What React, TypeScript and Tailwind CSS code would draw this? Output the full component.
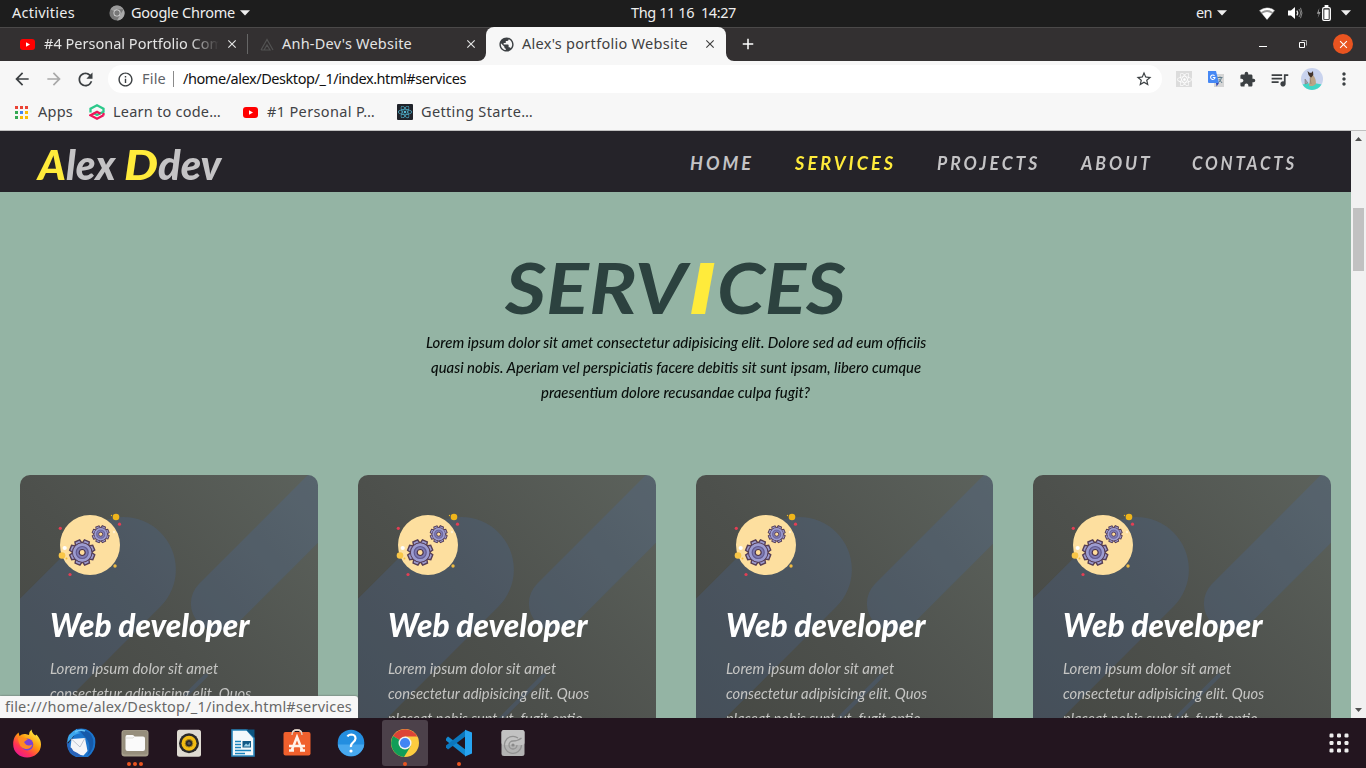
import { useLayoutEffect, useRef } from "react";
import type { ReactNode } from "react";
import {
  MdAdd,
  MdArrowBack,
  MdArrowForward,
  MdClose,
  MdExtension,
  MdMoreVert,
  MdOutlineInfo,
  MdPublic,
  MdQueueMusic,
  MdRefresh,
  MdStarBorder,
} from "react-icons/md";
import { FaReact } from "react-icons/fa";

/* Spaces the letters of a label so that it fills a given width. */
function Label({ w, className = "", children }: { w: number; className?: string; children: string }) {
  const ref = useRef<HTMLSpanElement>(null);
  useLayoutEffect(() => {
    const el = ref.current;
    if (!el) return;
    el.style.letterSpacing = "0px";
    el.style.letterSpacing = `${(w - el.getBoundingClientRect().width) / children.length}px`;
  }, [w, children]);
  return (
    <span ref={ref} className={`inline-block shrink-0 pb-[2px] whitespace-pre ${className}`}>
      {children}
    </span>
  );
}

/* Condenses or widens display type to a given width. */
function Display({ w, className = "", children }: { w: number; className?: string; children: string }) {
  const ref = useRef<HTMLSpanElement>(null);
  useLayoutEffect(() => {
    const el = ref.current;
    if (el) el.style.transform = `scaleX(${w / el.offsetWidth})`;
  }, [w, children]);
  return (
    <span className="inline-block shrink-0 text-left" style={{ width: w }}>
      <span ref={ref} className={`inline-block origin-left whitespace-pre ${className}`}>
        {children}
      </span>
    </span>
  );
}

const Caret = () => (
  <svg className="h-[6px] w-[10px] shrink-0" viewBox="0 0 10 6">
    <path d="M0 .3h10L5 5.6z" fill="#eee" />
  </svg>
);

const Youtube = () => (
  <svg className="h-[11px] w-[15px] shrink-0" viewBox="0 0 15 11">
    <rect width="15" height="11" rx="3" fill="#f00" />
    <path d="M6 3.2v4.6l4-2.3z" fill="#fff" />
  </svg>
);

function TopBar() {
  return (
    <div className="flex h-[27px] items-center bg-[#1d1d1d] pb-px text-[14.5px] text-[#eeeeee]">
      <Label w={63} className="ml-3">Activities</Label>
      <svg className="ml-[34px] h-4 w-4 shrink-0" viewBox="0 0 16 16">
        <circle cx="8" cy="8" r="7.6" fill="#777" />
        <path d="M8 8L1.4 4.3A7.6 7.6 0 0 1 14.6 4.3H8z" fill="#999" />
        <path d="M8 15.6L11.3 9.7 14.6 4.3A7.6 7.6 0 0 1 8 15.6" fill="#aaa" />
        <circle cx="8" cy="8" r="3.5" fill="#ddd" />
        <circle cx="8" cy="8" r="2.7" fill="#777" />
      </svg>
      <Label w={104} className="ml-[6px]">Google Chrome</Label>
      <div className="ml-[5px]"><Caret /></div>
      <Label w={105} className="ml-[381px]">Thg 11 16  14:27</Label>
      <Label w={16} className="ml-[460px]">en</Label>
      <div className="ml-[5px]"><Caret /></div>
      <svg className="ml-8 h-[13px] w-4 shrink-0" viewBox="0 0 16 13">
        <path d="M0 3.6Q8-2.8 16 3.6L8 13z" fill="#999" />
        <path d="M1 3.4Q8-1.6 15 3.4L13.7 5Q8 1.2 2.3 5z" fill="#fff" />
        <path d="M3.2 6.5Q8 3.3 12.8 6.5L8 12.4z" fill="#fff" />
      </svg>
      <svg className="ml-[13px] h-[14px] w-[15px] shrink-0" viewBox="0 0 15 14">
        <path d="M0 4.5h3L7 1v12L3 9.5H0z" fill="#fff" />
        <path d="M8.8 4.6q1.8 2.4 0 4.8" fill="none" stroke="#ddd" strokeWidth="1.3" />
        <path d="M10.9 3q3.2 4 0 8M12.5 1.8q3 5.2 0 10.4" fill="none" stroke="#888" strokeWidth="1" />
      </svg>
      <svg className="ml-[13px] h-4 w-[15px] shrink-0" viewBox="0 0 15 16">
        <path d="M3.3 3L.8 8.7h2L1.7 13 4.6 7H2.8z" fill="#999" />
        <rect x="6.7" y="2.7" width="7.6" height="12.6" rx="1.3" fill="none" stroke="#fff" strokeWidth="1.3" />
        <path d="M8.3 4.5h4.4V14H8.3zM8.6 0h3.8v2.5H8.6z" fill="#fff" />
      </svg>
      <div className="ml-[10px]"><Caret /></div>
    </div>
  );
}

function TabStrip() {
  return (
    <div className="flex h-[34px] items-stretch bg-[#333031] text-[14.5px] text-[#e4e4e4] shadow-[inset_0_1px_0_#4b4949]">
      <div className="flex w-[247px] items-center pl-5">
        <Youtube />
        <div className="ml-[9px] w-[176px] overflow-hidden whitespace-nowrap [mask-image:linear-gradient(to_right,#000_145px,transparent_175px)]">
          <Label w={188}>#4 Personal Portfolio Comp</Label>
        </div>
        <MdClose className="ml-[5px] h-[14px] w-[14px] shrink-0 stroke-current" />
      </div>
      <div className="my-auto h-5 w-px bg-[#666]" />
      <div className="flex w-[238px] items-center pl-[12px]">
        <svg className="h-[13px] w-[14px] shrink-0" viewBox="0 0 14 13" fill="none" stroke="#525252" strokeWidth="1.2">
          <path d="M1 12L7 1.5 13 12M4 12l3-5 3 5zM1 12h3" />
        </svg>
        <Label w={130} className="ml-[8px]">Anh-Dev's Website</Label>
        <MdClose className="ml-[52px] h-[14px] w-[14px] shrink-0 stroke-current" />
      </div>
      <div className="relative flex w-[240px] items-center rounded-t-[8px] bg-[#f7f7f7] pl-3 text-[#404040]">
        <svg className="absolute bottom-0 -left-2 h-2 w-2" viewBox="0 0 8 8"><path d="M8 0v8H0a8 8 0 0 0 8-8" fill="#f7f7f7" /></svg>
        <svg className="absolute -right-2 bottom-0 h-2 w-2" viewBox="0 0 8 8"><path d="M0 0v8h8a8 8 0 0 1-8-8" fill="#f7f7f7" /></svg>
        <MdPublic className="h-[17px] w-[17px] shrink-0 text-[#3c4043]" />
        <Label w={166} className="ml-[7px]">Alex's portfolio Website</Label>
        <MdClose className="ml-[15px] h-[14px] w-[14px] shrink-0 stroke-current" />
      </div>
      <div className="flex grow items-center pl-[13px] text-white">
        <MdAdd className="h-[18px] w-[18px] stroke-current" />
        <svg className="ml-auto h-2 w-[9px]" viewBox="0 0 9 8"><path d="M0 6h8v1H0z" fill="#fff" /></svg>
        <svg className="ml-[31px] h-2 w-2" viewBox="0 0 8 8" fill="none"><path d="M.5 2.5h5v5h-5z" stroke="#fff" /><path d="M2.5.5h5v5" stroke="#aaa" /></svg>
        <div className="mr-[13px] ml-[26px] flex h-5 w-5 items-center justify-center rounded-full bg-[#e95420]">
          <MdClose className="h-[13px] w-[13px] stroke-current" />
        </div>
      </div>
    </div>
  );
}

function Toolbar() {
  return (
    <div className="flex h-9 items-center bg-[#f7f7f7] text-[14.5px] text-[#3c4043]">
      <MdArrowBack className="ml-[12px] h-5 w-5 shrink-0" />
      <MdArrowForward className="ml-[12px] h-5 w-5 shrink-0 text-[#a9a9a9]" />
      <MdRefresh className="ml-[11px] h-[21px] w-[21px] shrink-0" />
      <div className="ml-[12px] flex h-7 w-[1054px] shrink-0 items-center rounded-full bg-white">
        <MdOutlineInfo className="ml-[9px] h-[17px] w-[17px] shrink-0" />
        <Label w={24} className="ml-[8px] text-[#5f6368]">File</Label>
        <div className="ml-[7px] h-4 w-px bg-[#8a8a8a]" />
        <Label w={283} className="ml-[9px] text-[#111]">/home/alex/Desktop/_1/index.html#services</Label>
        <MdStarBorder className="mr-[9px] ml-auto h-[18px] w-[18px]" />
      </div>
      <div className="ml-[14px] flex h-4 w-4 shrink-0 items-center justify-center bg-[#dcdcdc]">
        <FaReact className="h-[15px] w-[15px] text-white" />
      </div>
      <svg className="ml-4 h-4 w-4 shrink-0" viewBox="0 0 16 16">
        <rect x="6" y="3" width="10" height="13" fill="#d5d5d5" />
        <path d="M0 0h8l3 12H1a1 1 0 0 1-1-1z" fill="#4688f4" />
        <path d="M8 12h3l-2.4 3.5z" fill="#3247b5" />
        <path d="M9.5 6.5h5M12 5.5v1M13.5 6.5q-.5 3-3 5M10.8 8l3.3 4" stroke="#607d8b" fill="none" />
        <path d="M6.5 4.8A2.2 2.2 0 1 0 7 6.5H4.8" stroke="#fff" strokeWidth="1.1" fill="none" />
      </svg>
      <MdExtension className="ml-[15px] h-[17px] w-[17px] shrink-0" />
      <MdQueueMusic className="ml-[13px] h-[21px] w-[21px] shrink-0" />
      <svg className="ml-[11px] h-[22px] w-[22px] shrink-0" viewBox="0 0 22 22">
        <circle cx="11" cy="11" r="11" fill="#c9d3ee" />
        <path d="M1.5 16.5Q11 13.5 20.5 16.5A11 11 0 0 1 1.5 16.5" fill="#42d5c5" />
        <path d="M8 7h4q3 3 3 9l-3 2H8l1-8z" fill="#bba486" />
        <path d="M6.5 3l2 1.8h2L12 3l.3 4-2.3 2.7L7.500 7z" fill="#43352c" />
        <path d="M9 10l1 6M4 11l3 4-3 1z" fill="#9da2b4" stroke="#786c60" strokeWidth=".5" />
      </svg>
      <MdMoreVert className="ml-[11px] h-5 w-5 shrink-0" />
    </div>
  );
}

const appColors = ["fill-[#ea4335]", "fill-[#ea4335]", "fill-[#ea4335]", "fill-[#34a853]", "fill-[#4285f4]", "fill-[#fbbc05]", "fill-[#34a853]", "fill-[#fbbc05]", "fill-[#fbbc05]"];

function Bookmarks() {
  return (
    <div className="flex h-[34px] items-center border-b border-[#c0c0c0] bg-[#f7f7f7] pb-[3px] text-[14.5px] text-[#3f4245]">
      <svg className="ml-[15px] h-[13px] w-[13px] shrink-0" viewBox="0 0 13 13">
        {appColors.map((c, i) => (
          <rect key={i} className={c} x={(i % 3) * 5} y={Math.floor(i / 3) * 5} width="3" height="3" />
        ))}
      </svg>
      <Label w={35} className="ml-[10px]">Apps</Label>
      <svg className="ml-4 h-4 w-4 shrink-0" viewBox="0 0 16 16" fill="none" strokeWidth="2.3">
        <path d="M1.500 8.500V4.700L8 1.300l6.500 3.400v3L8 11 4.500 9" stroke="#2cc98b" />
        <path d="M14.500 11.300L8 14.700l-6.500-3.400L8 7.700l3.500 2" stroke="#f0145a" />
        <path d="M14.500 11.500V9" stroke="#f0145a" />
      </svg>
      <Label w={108} className="ml-2">Learn to code…</Label>
      <div className="ml-[22px] flex"><Youtube /></div>
      <Label w={108} className="ml-[9px]">#1 Personal P…</Label>
      <div className="ml-[22px] flex h-4 w-4 shrink-0 items-center justify-center rounded-[1px] bg-[#20232a]">
        <FaReact className="h-[14px] w-[14px] text-[#53b9d5]" />
      </div>
      <Label w={112} className="ml-2">Getting Starte…</Label>
    </div>
  );
}

function SiteNav() {
  return (
    <nav className="flex h-[61px] shrink-0 items-center bg-[#252329] font-['Lato',sans-serif] italic text-[#c4c3c5]">
      <div className="ml-[38px] flex pt-[6px] text-[41px] leading-none font-black">
        <Display w={28} className="text-[#ffeb3b]">A</Display>
        <Display w={58}>{"lex "}</Display>
        <Display w={34} className="text-[#ffeb3b]">D</Display>
        <Display w={63}>dev</Display>
      </div>
      <div className="mr-[54px] ml-auto flex pt-[2px] text-[18px] font-bold">
        <Display w={64} className="tracking-[3px]">HOME</Display>
        <div className="ml-[41px] text-[#ffeb3b]"><Display w={101} className="tracking-[3px]">SERVICES</Display></div>
        <div className="ml-[41px]"><Display w={103} className="tracking-[3px]">PROJECTS</Display></div>
        <div className="ml-[41px]"><Display w={72} className="tracking-[3px]">ABOUT</Display></div>
        <div className="ml-[39px]"><Display w={105} className="tracking-[3px]">CONTACTS</Display></div>
      </div>
    </nav>
  );
}

function Gear({ x, y, r }: { x: number; y: number; r: number }) {
  return (
    <g transform={`translate(${x} ${y}) scale(${r / 13})`}>
      <g fill="#9c9bd0" stroke="#563e55" strokeWidth="1.4">
        {[0, 45, 90, 135, 180, 225, 270, 315].map((a) => (
          <path key={a} d="M-3.600-8L-2.600-12.500h5.200L3.600-8z" transform={`rotate(${a + 22})`} />
        ))}
        <circle r="9.6" />
      </g>
      <circle r="9.2" fill="#9c9bd0" />
      <circle r="6" fill="#7f7cb5" stroke="#625a90" strokeWidth="1.2" />
      <circle r="3" fill="#ffdc9a" stroke="#49324b" strokeWidth="1.2" />
    </g>
  );
}

function GearBadge() {
  return (
    <svg className="h-20 w-20" viewBox="0 0 80 80">
      <circle cx="40" cy="40" r="30" fill="#fddf9f" />
      <circle cx="66" cy="12" r="3.3" fill="#efb51b" />
      <circle cx="61.5" cy="10.5" r=".7" fill="#efb51b" />
      <circle cx="12" cy="50.5" r="3.3" fill="#f9c647" />
      <circle cx="16.5" cy="53.5" r="1" fill="#f6c036" />
      <circle cx="65" cy="61" r="1.7" fill="#efbb42" />
      <circle cx="14.7" cy="43" r="2.1" fill="#fff" />
      <circle cx="64" cy="27" r="1.2" fill="#fff0cf" />
      <circle cx="10.3" cy="23.3" r="1.6" fill="#e43e54" />
      <circle cx="69.5" cy="19.2" r="1.6" fill="#e43e54" />
      <circle cx="20" cy="69.5" r="1.6" fill="#e43e54" />
      <Gear x={32.2} y={47.500} r={13} />
      <Gear x={50.700} y={29.200} r={8.800} />
    </svg>
  );
}

function ServiceCard() {
  return (
    <article className="relative h-[330px] overflow-hidden rounded-[10px] bg-linear-to-tr from-[#434540] via-[#4d504c] to-[#5c625c] p-[30px] font-['Lato',sans-serif] italic">
      <svg className="absolute inset-0 h-full w-full" viewBox="0 0 298 330" preserveAspectRatio="none" stroke="#466eb4" strokeOpacity=".2" strokeLinecap="round">
        <path d="M103.5 94.5L-120 318" strokeWidth="105" />
        <path d="M198.5 128.5L440-113" strokeWidth="55" />
        <path d="M186 200.5L60 326.5" strokeWidth="4" />
      </svg>
      <div className="relative">
        <GearBadge />
        <h2 className="mt-4 h-[51px] text-[31.5px] leading-[48px] font-black text-white">
          <Display w={199.5}>Web developer</Display>
        </h2>
        <p className="mt-1 text-[15.5px] leading-[25px] text-[#c5c5c3]">
          <Display w={168}>Lorem ipsum dolor sit amet</Display>
          <br />
          <Display w={201}>consectetur adipisicing elit. Quos</Display>
          <br />
          <Display w={195}>placeat nobis sunt ut, fugit optio</Display>
        </p>
      </div>
    </article>
  );
}

function Website() {
  return (
    <main className="flex h-[587px] w-[1351px] flex-col overflow-hidden bg-[#94b4a4]">
      <SiteNav />
      <header className="mt-[54px] flex shrink-0 flex-col items-center font-['Lato',sans-serif] italic">
        <h1 className="flex h-[84px] text-[71px] leading-[82px] font-bold text-[#2c423f]">
          <Display w={182}>SERV</Display>
          <Display w={30} className="text-[#ffeb3b]">I</Display>
          <Display w={129}>CES</Display>
        </h1>
        <div className="flex flex-col items-center text-[15.5px] leading-[25px] font-medium text-[#080d0b]">
          <Display w={500}>Lorem ipsum dolor sit amet consectetur adipisicing elit. Dolore sed ad eum officiis</Display>
          <Display w={490}>quasi nobis. Aperiam vel perspiciatis facere debitis sit sunt ipsam, libero cumque</Display>
          <Display w={269}>praesentium dolore recusandae culpa fugit?</Display>
        </div>
      </header>
      <section className="mt-[70px] grid grid-cols-4 gap-10 px-5">
        {[0, 1, 2, 3].map((i) => (
          <ServiceCard key={i} />
        ))}
      </section>
    </main>
  );
}

function Scrollbar() {
  return (
    <div className="flex h-[587px] w-[15px] flex-col items-center bg-[#f1f1f1]">
      <svg className="mt-[6px] h-1 w-[7px]" viewBox="0 0 7 4"><path d="M0 4h7L3.5 0z" fill="#505050" /></svg>
      <div className="mt-[67px] h-[63px] w-[11px] bg-[#c1c1c1]" />
      <svg className="mt-auto mb-[6px] h-1 w-[7px]" viewBox="0 0 7 4"><path d="M0 0h7L3.5 4z" fill="#505050" /></svg>
    </div>
  );
}

const Firefox = () => (
  <svg className="h-[29px] w-7" viewBox="0 0 28 28">
    <defs>
      <linearGradient id="ff" x1=".85" y1=".1" x2=".2" y2="1">
        <stop offset="0" stopColor="#fff044" />
        <stop offset=".4" stopColor="#ff980e" />
        <stop offset=".7" stopColor="#ff3750" />
        <stop offset="1" stopColor="#e8129b" />
      </linearGradient>
    </defs>
    <path d="M3 5.5L5.5 3l1 3.5Q9 4 12.5 4.500L16 5.5Q16 2 18.5 0 19 4 22.5 6l1-1Q28 10 28 15a13.8 13 0 0 1-27.8 0Q0 9 3 5.5" fill="url(#ff)" />
    <circle cx="14.3" cy="15" r="6" fill="#7942d6" />
    <path d="M5 8.5q4-2 7 .5l3 .5-4 3q3 5.5 8.500 2.500-2 5-7 4.500Q5.500 18 5 8.500" fill="#ff8a22" />
  </svg>
);

const Thunderbird = () => (
  <svg className="h-[30px] w-[30px]" viewBox="0 0 30 30">
    <path d="M10 1Q24-2 29 10q2 12-7 19H10Q2 26 1 17L8 8z" fill="#1b74cc" />
    <path d="M14 3q10-2 13 8 2 10-6 17 6-12-3-20z" fill="#1559a9" />
    <path d="M1 15Q1 5 11 1q-1 3 4 4-7 1-9 5z" fill="#3ba6ec" />
    <path d="M9 4q5-3 10-1" fill="none" stroke="#67c3f5" strokeWidth="1.500" />
    <path d="M5.500 11L19 10l2.500 13-4 4.500Q9 27 4.500 20z" fill="#f4f5f8" />
    <path d="M5.500 11l8.500 8 5-9" fill="none" stroke="#bcc3cf" />
    <path d="M.5 14l2 2 1 3 2 1 2 3 4 2 5 3.500Q3 30 .5 14" fill="#2b62b8" />
  </svg>
);

const Files = () => (
  <svg className="h-7 w-7" viewBox="0 0 28 28">
    <rect x=".5" y="1" width="27" height="26.500" rx="3" fill="#a79f8c" />
    <rect x="1.500" y="1.500" width="25" height="24" rx="2.500" fill="#968e7c" />
    <path d="M6 6h5.500q1.500 0 2 1.500H22q2 0 2 2V20q0 2-2 2H6.500q-2 0-2-2V8q0-2 1.500-2" fill="#fafafa" />
    <path d="M5 9h7l1.500-1.500" fill="none" stroke="#deddd9" />
  </svg>
);

const Rhythmbox = () => (
  <svg className="h-7 w-7" viewBox="0 0 28 28">
    <rect x="2" y=".8" width="24" height="27" rx="2.500" fill="#dfdbd2" />
    <circle cx="14" cy="14.300" r="10" fill="#292929" />
    <circle cx="14" cy="14.300" r="7.500" fill="#f2bd13" />
    <circle cx="14" cy="14.300" r="3.800" fill="#292929" stroke="#a88518" />
    <circle cx="14" cy="14.300" r="1.500" fill="#555" />
  </svg>
);

const Writer = () => (
  <svg className="h-7 w-7" viewBox="0 0 28 28">
    <path d="M3 1h15l7 8v18H3z" fill="#f4f9fb" stroke="#2785bc" strokeWidth="1.600" />
    <path d="M17 .5h8.500V9z" fill="#0c547f" />
    <path d="M6 12.500h6M6 15.500h6M6 18.500h6M6 21.500h16M6 24.500h10" stroke="#1b83bb" strokeWidth="1.500" />
    <path d="M13.500 12h8.500v6.500h-8.500z" fill="#115985" />
    <path d="M14.500 17.500l2.500-3 2 1.500 2-2.500v4z" fill="#9ad1e9" />
  </svg>
);

const Software = () => (
  <svg className="h-7 w-7" viewBox="0 0 28 28">
    <path d="M9 6q0-5 5-5t5 5" fill="none" stroke="#e4d5c9" strokeWidth="1.700" />
    <rect x=".5" y="3" width="27" height="23.500" rx="2" fill="#f0602d" />
    <path d="M9 6q0-5 5-5t5 5" fill="none" stroke="#e4d5c9" strokeWidth="1.300" />
    <path d="M8.500 22L14 8 19.500 22M6 17h16M6 21.500h5M17 21.500h5" fill="none" stroke="#fff2ea" strokeWidth="2.500" />
  </svg>
);

const Help = () => (
  <svg className="h-7 w-7" viewBox="0 0 28 28">
    <circle cx="14" cy="14" r="13.300" fill="#238ee0" />
    <path d="M.8 15.500h26.400A13.300 13.300 0 0 1 .8 15.500" fill="#48a8ee" />
    <path d="M10.500 7.500q1-2 4-2 4 .3 4 4 0 2-2.500 4T14 18" fill="none" stroke="#fff" strokeWidth="2.200" />
    <circle cx="14" cy="22" r="1.600" fill="#fff" />
  </svg>
);

const Chrome = () => (
  <svg className="h-7 w-7" viewBox="0 0 28 28">
    <circle cx="14" cy="14" r="14" fill="#fccc40" />
    <path d="M14 14L2 7A14 14 0 0 1 26.200 7.500H14z" fill="#dc4437" />
    <path d="M14 14L2 7A14 14 0 0 0 13 28l6.500-10.500z" fill="#119d58" />
    <circle cx="14" cy="14" r="6.500" fill="#f2f2f2" />
    <circle cx="14" cy="14" r="5.100" fill="#4285f4" />
  </svg>
);

const VsCode = () => (
  <svg className="h-7 w-7" viewBox="0 0 28 28">
    <path d="M1 9.500l2-2 18 13.500V27.500L1 11.500z" fill="#1389d0" />
    <path d="M1 18.500l2 2L21 7V.700L1 16.500z" fill="#0b77bd" />
    <path d="M20 .700L27 3.500v21L20 27.500z" fill="#27a4f1" />
  </svg>
);

const Disks = () => (
  <svg className="h-7 w-7" viewBox="0 0 28 28">
    <rect x="2.500" y="1" width="23" height="26" rx="2.500" fill="#b3b3b3" />
    <rect x="2.500" y="1" width="23" height="15" rx="2.500" fill="#c2c2c2" />
    <path d="M22.500 16A8.500 8.500 0 1 1 19 9M18 16A4 4 0 1 1 14 12q5 0 8.500-3" fill="none" stroke="#929292" strokeWidth="1.300" />
    <circle cx="14" cy="16" r="1.600" fill="#898989" />
  </svg>
);

function DockItem({ dots = 0, active = false, children }: { dots?: number; active?: boolean; children: ReactNode }) {
  return (
    <div className="flex h-[50px] w-[54px] items-center justify-center">
      <div className={`relative flex h-[46px] w-[46px] items-center justify-center rounded-[3px] ${active ? "bg-[#4c414a]" : ""}`}>
        {children}
        <div className="absolute inset-x-0 bottom-0 flex justify-center gap-[2px]">
          {Array.from({ length: dots }, (_, i) => (
            <span key={i} className="h-1 w-1 rounded-full bg-[#e95420]" />
          ))}
        </div>
      </div>
    </div>
  );
}

function Dock() {
  return (
    <footer className="flex h-[50px] items-center bg-[#23151f]">
      <DockItem><Firefox /></DockItem>
      <DockItem><Thunderbird /></DockItem>
      <DockItem dots={3}><Files /></DockItem>
      <DockItem><Rhythmbox /></DockItem>
      <DockItem><Writer /></DockItem>
      <DockItem><Software /></DockItem>
      <DockItem><Help /></DockItem>
      <DockItem dots={1} active><Chrome /></DockItem>
      <DockItem dots={1}><VsCode /></DockItem>
      <DockItem><Disks /></DockItem>
      <svg className="mr-[17px] ml-auto h-5 w-5" viewBox="0 0 20 20" fill="#eee">
        {Array.from({ length: 9 }, (_, i) => (
          <rect key={i} x={(i % 3) * 7.5 + 0.5} y={Math.floor(i / 3) * 7.5 + 0.5} width="4" height="4" rx="1.2" />
        ))}
      </svg>
    </footer>
  );
}

export default function App() {
  return (
    <div className="h-[768px] w-[1366px] overflow-hidden font-['Noto_Sans',sans-serif] leading-5">
      <TopBar />
      <TabStrip />
      <Toolbar />
      <Bookmarks />
      <div className="relative flex">
        <Website />
        <Scrollbar />
        <div className="absolute bottom-0 left-0 flex h-[22px] w-[358px] items-center rounded-tr-[3px] bg-[#f7f7f7] text-[14.5px] text-[#686868] shadow-[0_0_2px_#555]">
          <Label w={347} className="ml-[5px]">file:///home/alex/Desktop/_1/index.html#services</Label>
        </div>
      </div>
      <Dock />
    </div>
  );
}
